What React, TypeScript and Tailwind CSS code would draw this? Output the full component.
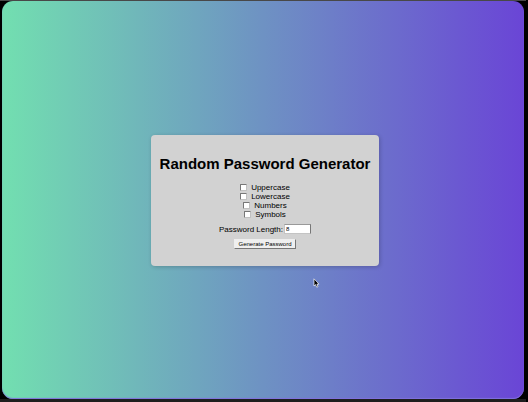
const options = ["Uppercase", "Lowercase", "Numbers", "Symbols"];

export default function App() {
  return (
    <div className="flex h-screen flex-col border-r-2 border-black bg-black font-['Liberation_Sans',Arial,sans-serif] text-black">
      <div className="flex flex-1 border-t border-b-3 border-t-[#484848] border-b-[#1e1e1e] pr-0.5 pl-0.5">
        <main className="relative flex flex-1 items-center justify-center rounded-[11px] bg-linear-to-r/srgb from-[#72dfb0] to-[#6a45d6] pt-px pl-1 shadow-[inset_0_-1px_1px_#8070dd]">
          <section className="rounded-sm bg-[#d2d2d2] px-[9px] pt-5 pb-[17px] text-center shadow-[1px_1px_4px_rgba(0,0,0,0.2)]">
            <h1 className="mb-2.5 text-[15px] leading-[18px] font-bold">Random Password Generator</h1>
            <form onSubmit={(event) => event.preventDefault()}>
              {options.map((name) => (
                <label key={name} className="flex h-[9px] items-center justify-center gap-1 text-[8px] leading-[9px]">
                  <input
                    type="checkbox"
                    className="size-[7px] appearance-none rounded-[1px] border border-[#777777] border-r-[#c0c0c0] border-b-[#c0c0c0] bg-white checked:bg-[#3475e0]"
                  />
                  {name}
                </label>
              ))}
              <div className="mt-[5px] flex items-center justify-center gap-px">
                <label htmlFor="length" className="text-[8px] leading-[9px]">
                  Password Length:
                </label>
                <input
                  id="length"
                  type="number"
                  defaultValue={8}
                  className="h-[10px] w-[27px] appearance-none border border-[#c4c4c4] border-t-[#999999] border-r-[#777777] bg-white px-px text-[6px] leading-[8px] [&::-webkit-inner-spin-button]:appearance-none"
                />
              </div>
              <button
                type="submit"
                className="mx-auto mt-[5px] block h-[10px] border border-[#eeeeee] border-r-[#777777] border-b-[#777777] bg-[#efefef] px-[3px] text-[6px] leading-[8px]"
              >
                Generate Password
              </button>
            </form>
          </section>
          <svg className="absolute top-[69.5%] left-[59.5%] h-[10px] w-[7px]" viewBox="0 0 7 10" aria-hidden="true">
            <path d="M1 0.8V8L2.6 6.6L3.7 9.2L5 8.6L3.9 6.1H6Z" fill="#000" stroke="#fff" strokeWidth="0.7" />
          </svg>
        </main>
      </div>
    </div>
  );
}
